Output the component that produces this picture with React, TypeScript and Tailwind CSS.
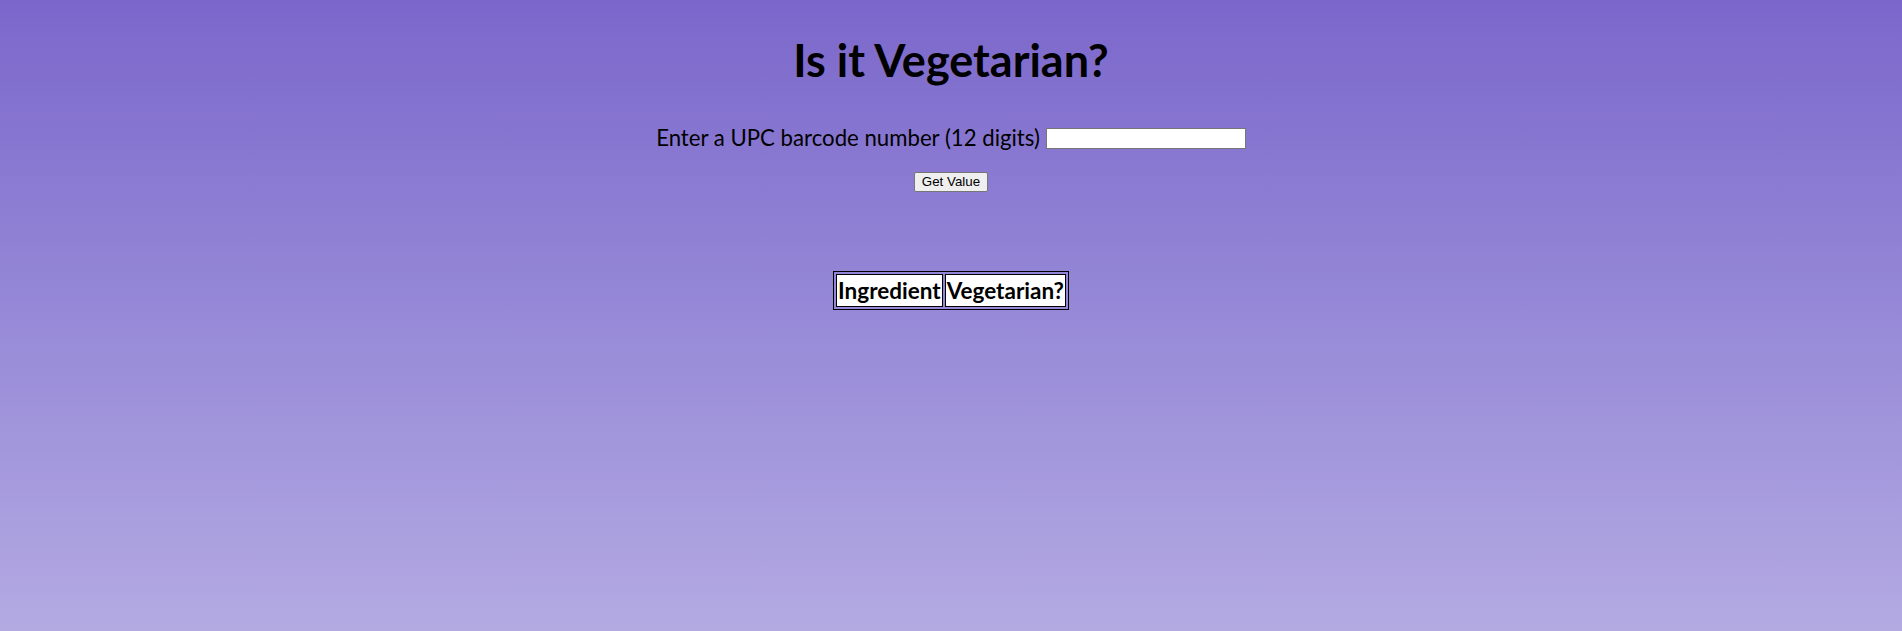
export default function App() {
  return (
    <div className="min-h-screen w-full bg-linear-to-b from-[#7b67cb] to-[#b4aae2] font-['Lato',sans-serif] text-black">
      <div className="flex flex-col items-center">
        <h1 className="mt-[30px] text-[45px] font-bold leading-[60px]">Is it Vegetarian?</h1>
        <div className="mt-[34px] flex items-center gap-[6px]">
          <label className="text-[22.2px] leading-[28px]">Enter a UPC barcode number (12 digits)</label>
          <input
            type="text"
            className="h-[21px] w-[200px] border border-[#767676] bg-white px-[2px] text-[13px]"
          />
        </div>
        <button className="mt-[20px] h-[20px] rounded-[2px] border border-[#767676] bg-[#efefef] px-[7px] font-['Liberation_Sans',sans-serif] text-[13.33px] leading-none">
          Get Value
        </button>
        <table className="mt-[79px] border-separate border-spacing-[2px] border border-black bg-transparent">
          <thead>
            <tr>
              <th className="border border-black bg-white px-[1px] py-[1px] text-[22.5px] font-bold leading-[29px]">Ingredient</th>
              <th className="border border-black bg-white px-[1px] py-[1px] text-[22.5px] font-bold leading-[29px]">Vegetarian?</th>
            </tr>
          </thead>
        </table>
      </div>
    </div>
  );
}
